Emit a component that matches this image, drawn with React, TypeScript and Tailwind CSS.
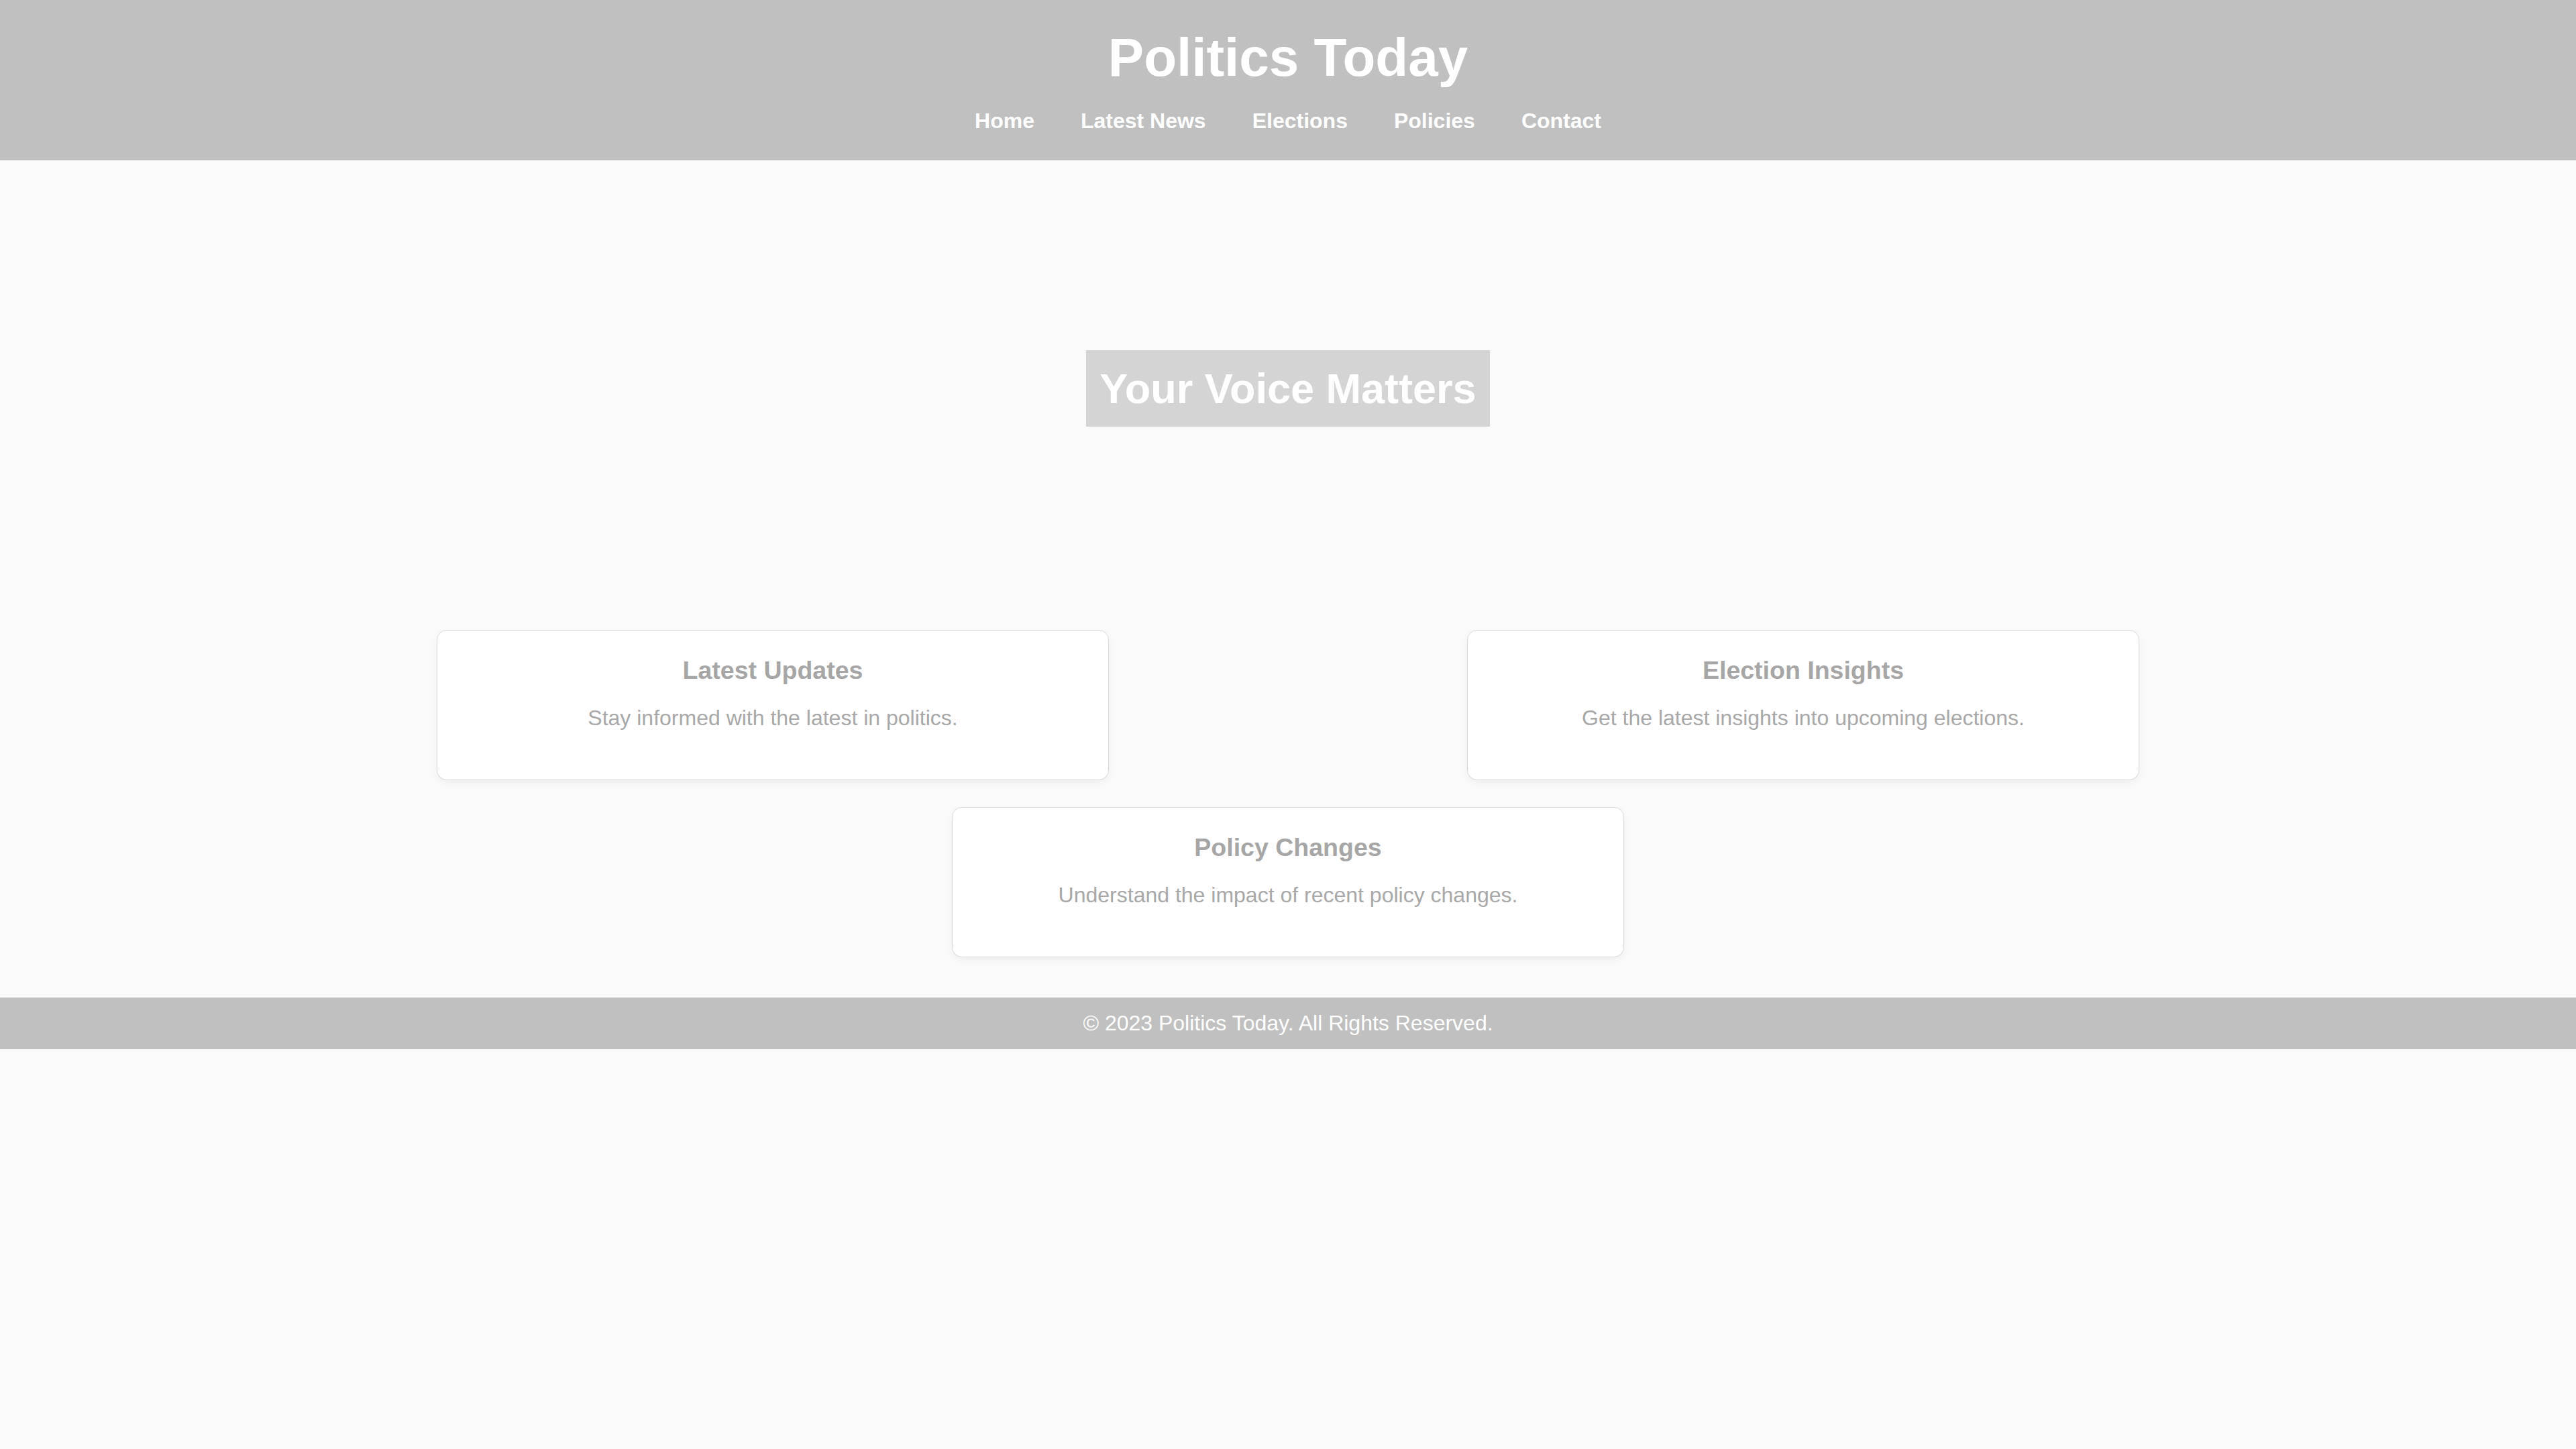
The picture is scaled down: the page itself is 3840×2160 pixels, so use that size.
const NAV_LINKS = ["Home", "Latest News", "Elections", "Policies", "Contact"]

const CARDS = [
  { title: "Latest Updates", text: "Stay informed with the latest in politics." },
  { title: "Election Insights", text: "Get the latest insights into upcoming elections." },
  { title: "Policy Changes", text: "Understand the impact of recent policy changes." },
]

function Card({ title, text }: { title: string; text: string }) {
  return (
    <div className="m-5 w-[1002px] shrink-0 rounded-[15px] border border-[#d9d9d9] bg-white pt-[38px] pb-[73px] text-center shadow-[0_4px_10px_rgba(0,0,0,0.05)]">
      <h3 className="text-[37.5px] font-bold leading-[43px] text-[#a6a6a6]">{title}</h3>
      <p className="mt-[31px] text-[32px] leading-[37px] text-[#a8a8a8]">{text}</p>
    </div>
  )
}

export default function App() {
  return (
    <div className="min-h-screen bg-[#fafafa] font-['Liberation_Sans',Arial,sans-serif]">
      <header className="bg-[#c0c0c0] pt-10 pb-10 text-center text-white">
        <h1 className="text-[80px] font-bold leading-[92px]">Politics Today</h1>
        <nav className="mt-[30px] flex justify-center gap-[69px] text-[32px] font-bold leading-[37px]">
          {NAV_LINKS.map((l) => (
            <a key={l} href="#">{l}</a>
          ))}
        </nav>
      </header>

      <section className="flex justify-center pt-[283px] pb-[283px]">
        <h2 className="bg-[#d4d4d4] px-5 py-5 text-[63px] font-bold leading-[74px] text-white">Your Voice Matters</h2>
      </section>

      <main className="mx-auto flex w-[3072px] flex-wrap justify-around pb-10">
        {CARDS.map((c) => (
          <Card key={c.title} title={c.title} text={c.text} />
        ))}
      </main>

      <footer className="bg-[#c0c0c0] py-5 text-center text-[32px] leading-[37px] text-white">
        © 2023 Politics Today. All Rights Reserved.
      </footer>
    </div>
  )
}
